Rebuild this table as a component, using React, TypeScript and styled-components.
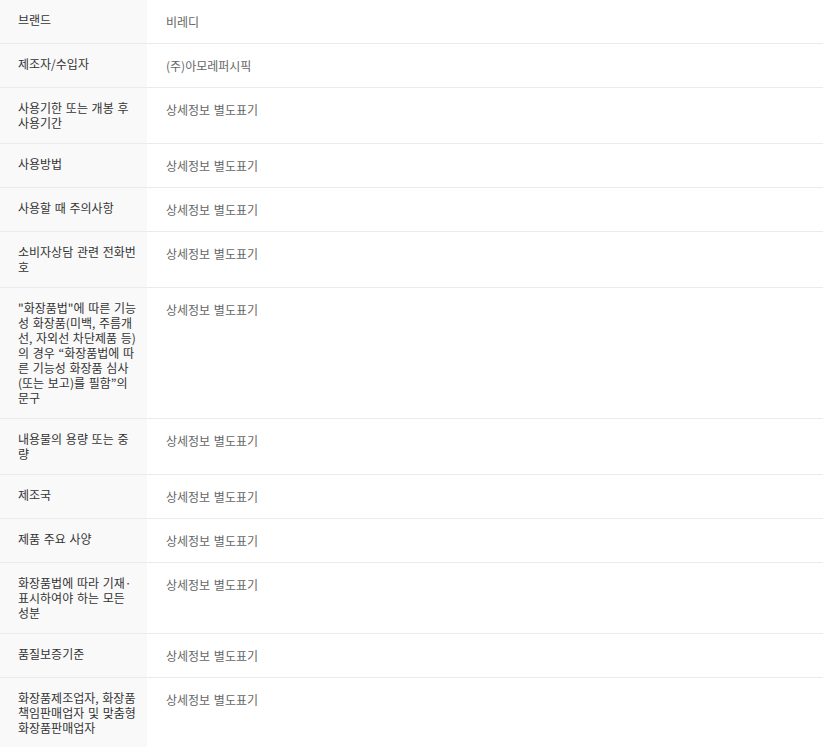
import React from "react";
import styled, { createGlobalStyle } from "styled-components";

const Global = createGlobalStyle`
  html, body { margin: 0; padding: 0; background: #fff; }
  body { font-family: "Noto Sans CJK KR", "Noto Sans", sans-serif; }
`;

const Table = styled.table`
  width: 823px;
  border-collapse: collapse;
  table-layout: fixed;
  font-size: 12px;
`;

const Row = styled.tr`
  border-bottom: 1px solid #ebebeb;
`;

const Label = styled.th`
  width: 147px;
  box-sizing: border-box;
  background: #f9f9f9;
  color: #333;
  font-weight: 400;
  text-align: left;
  vertical-align: top;
  line-height: 15px;
  word-spacing: 1px;
  padding: 12px 10px 13px 18px;
`;

const Value = styled.td`
  color: #666;
  vertical-align: top;
  line-height: 18px;
  word-spacing: 1px;
  padding: 13px 18px 12px 19px;
`;

const rows: [string, string][] = [
  ["브랜드", "비레디"],
  ["제조자/수입자", "(주)아모레퍼시픽"],
  ["사용기한 또는 개봉 후 사용기간", "상세정보 별도표기"],
  ["사용방법", "상세정보 별도표기"],
  ["사용할 때 주의사항", "상세정보 별도표기"],
  ["소비자상담 관련 전화번호", "상세정보 별도표기"],
  [
    "\"화장품법\"에 따른 기능성 화장품(미백, 주름개선, 자외선 차단제품 등)의 경우 “화장품법에 따른 기능성 화장품 심사(또는 보고)를 필함”의 문구",
    "상세정보 별도표기",
  ],
  ["내용물의 용량 또는 중량", "상세정보 별도표기"],
  ["제조국", "상세정보 별도표기"],
  ["제품 주요 사양", "상세정보 별도표기"],
  ["화장품법에 따라 기재·표시하여야 하는 모든 성분", "상세정보 별도표기"],
  ["품질보증기준", "상세정보 별도표기"],
  ["화장품제조업자, 화장품책임판매업자 및 맞춤형화장품판매업자", "상세정보 별도표기"],
];

export default function App() {
  return (
    <>
      <Global />
      <Table>
        <tbody>
          {rows.map(([k, v]) => (
            <Row key={k}>
              <Label>{k}</Label>
              <Value>{v}</Value>
            </Row>
          ))}
        </tbody>
      </Table>
    </>
  );
}
